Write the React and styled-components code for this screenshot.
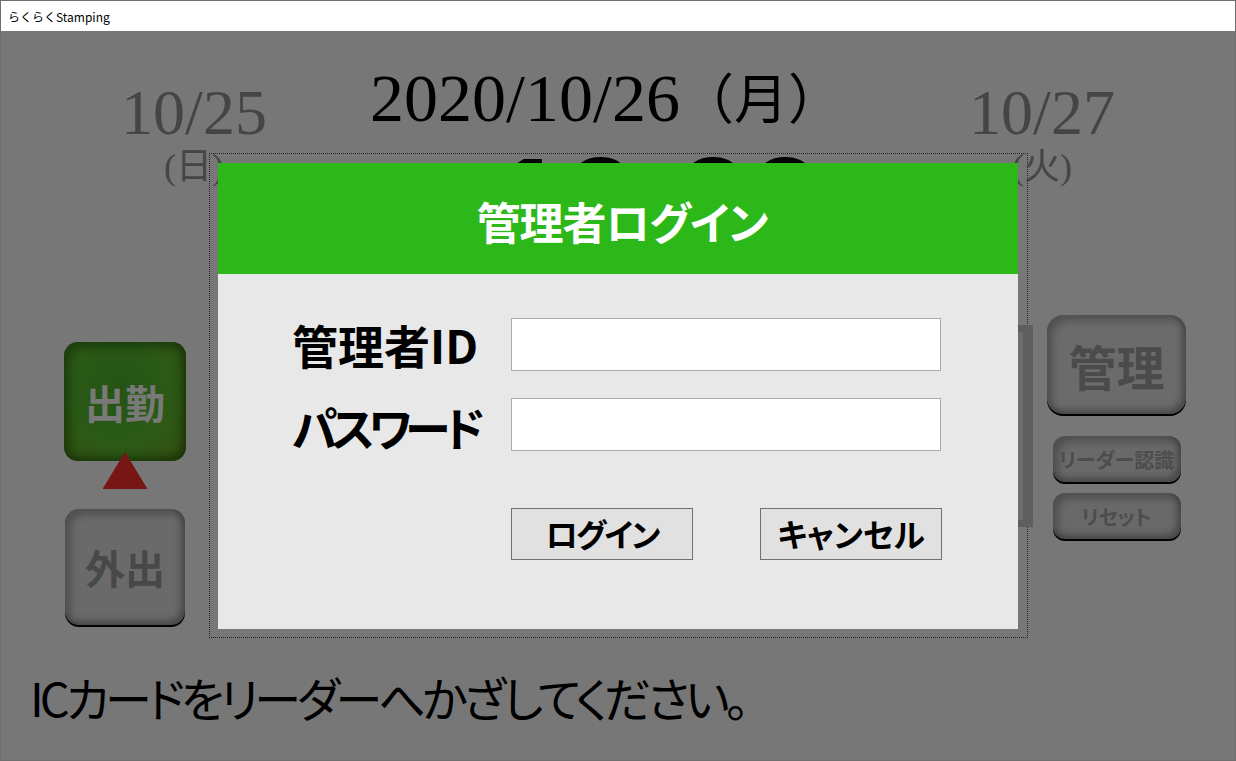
import React from 'react'
import styled, { createGlobalStyle } from 'styled-components'

const jp = `"Noto Sans CJK JP", "Noto Sans", sans-serif`
const serif = `"Liberation Serif", "Noto Sans CJK JP", serif`

const GlobalStyle = createGlobalStyle`
  html, body {
    margin: 0;
    padding: 0;
    background: #ffffff;
  }
  * {
    box-sizing: border-box;
  }
`

const Window = styled.div`
  width: 1236px;
  height: 761px;
  border: 1px solid #6f6f6f;
  display: flex;
  flex-direction: column;
  background: #fff;
  overflow: hidden;
`

const TitleBar = styled.div`
  height: 30px;
  flex: none;
  display: flex;
  align-items: center;
  padding-left: 7px;
  font: 12px ${jp};
  color: #000;
  background: #fff;
`

const Screen = styled.div`
  position: relative;
  flex: 1;
  background: #eeeeee;
  display: grid;
  grid-template-columns: 208px 819px 1fr;
  grid-template-rows: 122px 485px 1fr;
`

const Header = styled.div`
  grid-column: 1 / -1;
  grid-row: 1;
  display: flex;
  justify-content: space-between;
  align-items: flex-start;
  padding: 0 119px;
`

const SideDate = styled.div`
  width: 148px;
  margin-top: 50px;
  display: flex;
  flex-direction: column;
  align-items: center;
  color: #8a8a8a;
  font-family: ${serif};
  line-height: 1;
  position: relative;
  z-index: 1;
`

const DayNum = styled.div`
  font-size: 64px;
`

const WeekDay = styled.div`
  font-size: 36px;
  margin-top: 4px;
`

const MainDate = styled.div`
  margin-top: 33px;
  margin-right: 24px;
  font-family: ${serif};
  font-size: 68px;
  line-height: 1;
  color: #000;
  white-space: nowrap;

  span {
    font-family: ${jp};
    font-size: 54px;
    vertical-align: 2px;
  }
`

const LeftCol = styled.div`
  grid-column: 1;
  grid-row: 2;
  display: flex;
  flex-direction: column;
  align-items: center;
  padding: 189px 0 0 40px;
`

const RightCol = styled.div`
  grid-column: 3;
  grid-row: 2;
  display: flex;
  flex-direction: column;
  align-items: center;
  padding: 162px 30px 0 0;
`

const PadButton = styled.div`
  width: ${p => p.$w}px;
  height: ${p => p.$h}px;
  margin-top: ${p => p.$mt || 0}px;
  border-radius: ${p => p.$r || 14}px;
  flex: none;
  display: flex;
  align-items: center;
  justify-content: center;
  font-family: ${jp};
  font-weight: 700;
  font-size: ${p => p.$fs}px;
  font-feature-settings: 'palt';
  color: ${p => p.$fg};
  background: ${p => p.$bg};
  box-shadow:
    inset 5px 5px 9px rgba(0, 0, 0, 0.28),
    inset -4px -4px 7px rgba(0, 0, 0, 0.32),
    inset 2px 2px 2px rgba(255, 255, 255, 0.25),
    0 2px 0 #000;
`

const GreenButton = styled(PadButton)`
  background: radial-gradient(ellipse at 45% 40%, #4aa82a 0%, #58b42c 55%, #6a9a1e 100%);
  box-shadow:
    inset 6px 6px 10px rgba(20, 70, 10, 0.45),
    inset -4px -4px 8px rgba(10, 50, 0, 0.5);
`

const Arrow = styled.div`
  width: 45px;
  height: 37px;
  margin-top: -9px;
  flex: none;
  background: #f02c2c;
  clip-path: polygon(50% 0, 100% 100%, 0 100%);
  position: relative;
  z-index: 1;
`

const ClockBox = styled.div`
  grid-column: 2;
  grid-row: 2;
  border: 1px dotted #4a4a4a;
  display: flex;
  align-items: flex-start;
`

const Clock = styled.div`
  margin: -17px 0 0 280px;
  font-family: "Liberation Sans", sans-serif;
  font-weight: 700;
  font-size: 140px;
  letter-spacing: -6px;
  line-height: 1;
  color: #000;
  white-space: nowrap;
`

const LogPanel = styled.div`
  width: 150px;
  height: 202px;
  margin: 171px -6px 0 auto;
  flex: none;
  background: #dadada;
  border: 7px solid #bcbcbc;
  border-right-width: 10px;
`

const Footer = styled.div`
  grid-column: 1 / -1;
  grid-row: 3;
  padding: 35px 0 0 29px;
  font-family: ${jp};
  font-size: 47px;
  font-feature-settings: 'palt';
  letter-spacing: -4px;
  line-height: 1;
  color: #000;
`

const Shade = styled.div`
  position: absolute;
  inset: 0;
  background: rgba(0, 0, 0, 0.5);
  display: flex;
  align-items: center;
  justify-content: center;
  z-index: 5;
`

const Dialog = styled.div`
  width: 800px;
  height: 466px;
  background: #e8e8e8;
  display: flex;
  flex-direction: column;
`

const DialogHead = styled.div`
  height: 111px;
  flex: none;
  background: #2db81a;
  display: flex;
  align-items: center;
  justify-content: center;
  padding: 6px 0 0 8px;
  color: #fff;
  font-family: ${jp};
  font-weight: 700;
  font-size: 44px;
  letter-spacing: -1px;
  font-feature-settings: 'palt';
`

const Form = styled.div`
  display: grid;
  grid-template-columns: 219px 430px;
  grid-template-rows: 53px 53px;
  row-gap: 27px;
  padding: 44px 0 0 74px;
  align-items: center;
`

const Label = styled.div`
  font-family: ${jp};
  font-weight: 700;
  font-size: 46px;
  font-feature-settings: 'palt';
  letter-spacing: ${p => p.$ls || 0}px;
  color: #000;
  line-height: 1;
  margin-top: ${p => p.$mt || 0}px;
`

const Field = styled.input`
  width: 430px;
  height: 53px;
  border: 1px solid #ababab;
  background: #fff;
  outline: none;
  padding: 0 6px;
  font-size: 24px;
`

const Actions = styled.div`
  grid-column: 2;
  display: flex;
  justify-content: space-between;
  width: 431px;
  margin-top: 30px;
`

const Button = styled.button`
  width: 182px;
  height: 52px;
  border: 1px solid #707070;
  background: #e1e1e1;
  font-family: ${jp};
  font-weight: 700;
  font-size: 32px;
  font-feature-settings: 'palt';
  letter-spacing: ${p => p.$ls || 0}px;
  color: #000;
  padding: 0 0 2px;
  line-height: 1;
`

export default function App() {
  return (
    <>
      <GlobalStyle />
      <Window>
        <TitleBar>らくらくStamping</TitleBar>
        <Screen>
          <Header>
            <SideDate>
              <DayNum>10/25</DayNum>
              <WeekDay>(日)</WeekDay>
            </SideDate>
            <MainDate>
              2020/10/26<span>（月）</span>
            </MainDate>
            <SideDate>
              <DayNum>10/27</DayNum>
              <WeekDay>(火)</WeekDay>
            </SideDate>
          </Header>

          <LeftCol>
            <GreenButton $w={122} $h={119} $fs={40} $fg="#f2f2f2" $r={14}>
              出勤
            </GreenButton>
            <Arrow />
            <PadButton $w={120} $h={116} $mt={20} $fs={40} $fg="#909090" $bg="#d4d4d4">
              外出
            </PadButton>
          </LeftCol>

          <ClockBox>
            <Clock>10:00</Clock>
            <LogPanel />
          </ClockBox>

          <RightCol>
            <PadButton $w={139} $h={99} $fs={48} $fg="#969696" $bg="#d6d6d6" $r={16}>
              管理
            </PadButton>
            <PadButton $w={128} $h={46} $mt={22} $fs={20} $fg="#9a9a9a" $bg="#d2d2d2" $r={12}>
              リーダー認識
            </PadButton>
            <PadButton $w={128} $h={46} $mt={11} $fs={20} $fg="#9a9a9a" $bg="#d2d2d2" $r={12}>
              リセット
            </PadButton>
          </RightCol>

          <Footer>ICカードをリーダーへかざしてください。</Footer>

          <Shade>
            <Dialog>
              <DialogHead>管理者ログイン</DialogHead>
              <Form>
                <Label>管理者ID</Label>
                <Field type="text" />
                <Label $mt={4} $ls={-6}>パスワード</Label>
                <Field type="password" />
                <Actions>
                  <Button $ls={-2}>ログイン</Button>
                  <Button>キャンセル</Button>
                </Actions>
              </Form>
            </Dialog>
          </Shade>
        </Screen>
      </Window>
    </>
  )
}
